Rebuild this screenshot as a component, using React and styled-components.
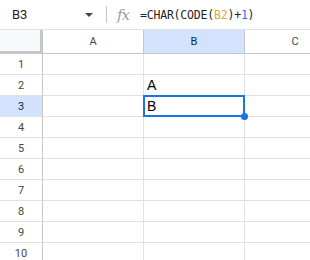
import React from "react"
import styled, { createGlobalStyle, css } from "styled-components"

const Global = createGlobalStyle`
  html, body { margin: 0; padding: 0; background: #fff; overflow: hidden; }
  body { font-family: Roboto, "Liberation Sans", Arial, sans-serif; }
`

const FormulaBar = styled.div`
  display: flex;
  align-items: center;
  height: 29px;
  border-bottom: 1px solid #e1e1e1;
`

const NameBox = styled.div`
  width: 80px;
  padding-left: 12px;
  font-size: 13px;
  color: #1f1f1f;
  display: flex;
  align-items: center;
`

const Caret = styled.span`
  width: 0;
  height: 0;
  border-left: 4px solid transparent;
  border-right: 4px solid transparent;
  border-top: 4px solid #444746;
  margin-left: -7px;
  margin-top: 1px;
`

const Divider = styled.span`
  width: 1px;
  height: 17px;
  background: #c7c7c7;
  margin-left: 13px;
  margin-right: 10px;
`

const Fx = styled.span`
  font-family: "DejaVu Serif", "Liberation Serif", serif;
  font-style: italic;
  font-size: 15px;
  color: #9aa0a6;
  width: 24px;
  letter-spacing: -1px;
`

const Formula = styled.div`
  font-family: "DejaVu Sans Mono", "Liberation Mono", monospace;
  font-size: 11.5px;
  color: #1f1f1f;
  letter-spacing: -0.2px;
  margin-left: -1px;
`

const Ref = styled.span`
  color: ${p => p.$c};
`

const Sheet = styled.div`
  width: 100%;
  overflow: hidden;
`

const Grid = styled.div`
  display: grid;
  grid-template-columns: 43px 101px 101px 101px;
  grid-auto-rows: 21px;
  grid-template-rows: 24px;
  width: 346px;
`

const Cell = styled.div`
  box-sizing: border-box;
  border-right: 1px solid #e1e1e1;
  border-bottom: 1px solid #e1e1e1;
  font-family: "Liberation Sans", Arial, sans-serif;
  font-size: 14px;
  color: #000;
  display: flex;
  align-items: center;
  padding-left: 3px;
  position: relative;
  ${p => p.$selected && css`
    &::after {
      content: "";
      position: absolute;
      left: -1px;
      top: -1px;
      right: -1px;
      bottom: -1px;
      border: 2px solid #1a73e8;
      z-index: 2;
    }
    &::before {
      content: "";
      position: absolute;
      right: -4px;
      bottom: -4px;
      width: 7px;
      height: 7px;
      border-radius: 50%;
      background: #1a73e8;
      z-index: 3;
    }
  `}
`

const Header = styled.div`
  box-sizing: border-box;
  border-right: 1px solid #c7c7c7;
  border-bottom: 1px solid ${p => (p.$row ? "#e1e1e1" : "#c7c7c7")};
  font-family: Roboto, "Liberation Sans", Arial, sans-serif;
  font-size: 11px;
  color: ${p => (p.$active ? "#0b2a5b" : "#444746")};
  background: ${p => (p.$active ? "#d3e3fd" : "#fff")};
  display: flex;
  align-items: center;
  justify-content: center;
`

const Corner = styled.div`
  box-sizing: border-box;
  background: #f8f9fa;
  border-right: 3px solid #c4c7c5;
  border-bottom: 3px solid #c4c7c5;
`

const rows = [
  { n: 1, b: "" },
  { n: 2, b: "A" },
  { n: 3, b: "B", sel: true },
  { n: 4 }, { n: 5 }, { n: 6 }, { n: 7 }, { n: 8 }, { n: 9 }, { n: 10 },
]

export default function App() {
  return (
    <>
      <Global />
      <FormulaBar>
        <NameBox>B3</NameBox>
        <Caret />
        <Divider />
        <Fx>fx</Fx>
        <Formula>
          =CHAR(CODE(<Ref $c="#e8a33d">B2</Ref>)+<Ref $c="#1a73e8">1</Ref>)
        </Formula>
      </FormulaBar>
      <Sheet>
        <Grid>
          <Corner />
          <Header>A</Header>
          <Header $active>B</Header>
          <Header>C</Header>
          {rows.map(r => (
            <React.Fragment key={r.n}>
              <Header $row $active={r.sel}>{r.n}</Header>
              <Cell />
              <Cell $selected={r.sel}>{r.b}</Cell>
              <Cell />
            </React.Fragment>
          ))}
        </Grid>
      </Sheet>
    </>
  )
}
